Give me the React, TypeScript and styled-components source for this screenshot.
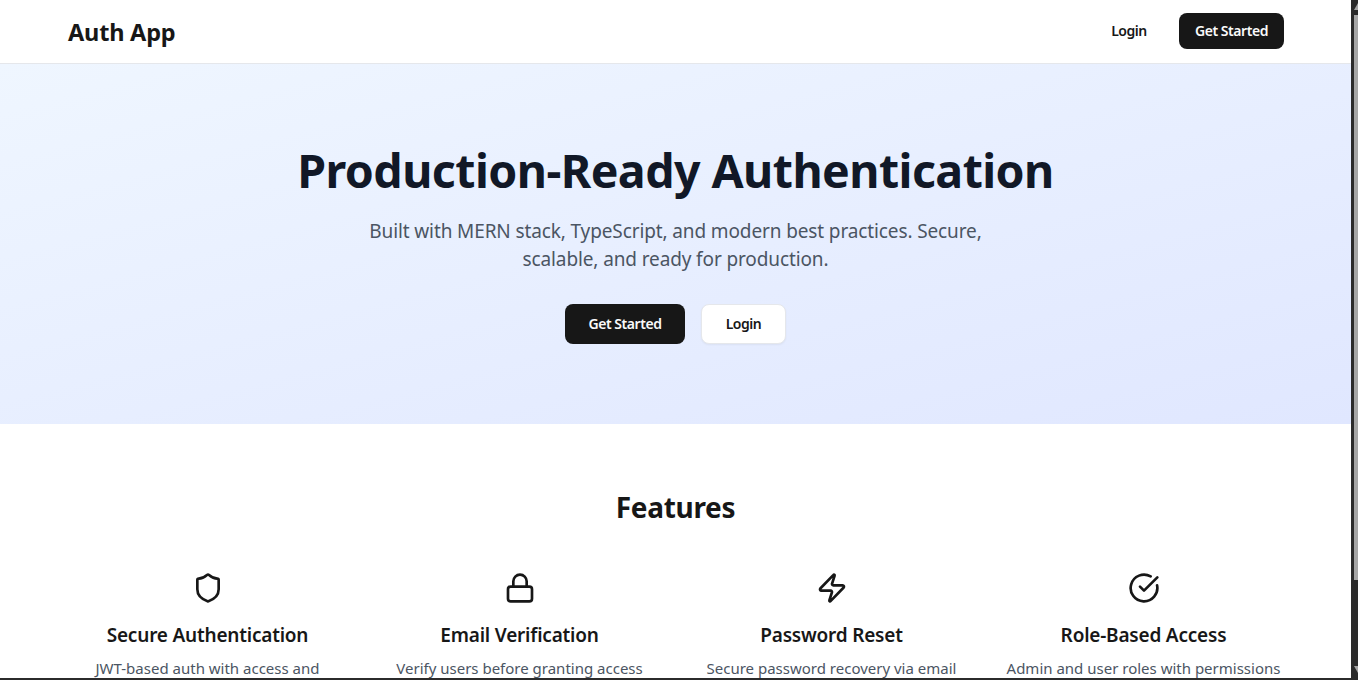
import React from "react";
import styled, { createGlobalStyle } from "styled-components";
import { Shield, Lock, Zap, CircleCheckBig } from "lucide-react";

const Global = createGlobalStyle`
  html, body { margin: 0; padding: 0; height: 100%; overflow: hidden; background: #fff; }
  body { font-family: "Noto Sans", "Open Sans", sans-serif; color: #171717; }
`;

const Frame = styled.div`
  height: 680px;
  display: flex;
  flex-direction: column;
  overflow: hidden;
  border-bottom: 2px solid #2b2b2b;
  box-sizing: border-box;
`;
const Body = styled.div`
  flex: 1;
  min-height: 0;
  display: flex;
`;
const Page = styled.main`
  flex: 1;
  min-width: 0;
  overflow: hidden;
`;
const Scrollbar = styled.div`
  width: 7px;
  background: #2b2b2b;
  display: flex;
  flex-direction: column;
  align-items: flex-end;
  padding: 3px 0 5px;
  box-sizing: border-box;
`;
const Arrow = styled.svg`
  width: 4px;
  height: 7px;
  display: block;
  flex: none;
`;
const Thumb = styled.div`
  width: 4px;
  height: 565px;
  margin-top: 5px;
  margin-bottom: auto;
  background: #a6a6a6;
`;
const Header = styled.header`
  height: 64px;
  box-sizing: border-box;
  border-bottom: 1px solid #e5e7eb;
  display: flex;
  align-items: center;
  justify-content: space-between;
  padding: 0 67px 2px 68px;
`;
const Brand = styled.div`
  font-size: 23.5px;
  font-weight: 700;
  margin-top: 2px;
  letter-spacing: -0.2px;
  color: #171717;
`;
const Actions = styled.nav`
  display: flex;
  align-items: center;
  gap: 15px;
`;
const Button = styled.button<{ $variant: "solid" | "ghost" | "outline"; $w: number; $h: number }>`
  width: ${(p) => p.$w}px;
  height: ${(p) => p.$h}px;
  font-family: inherit;
  font-size: 14px;
  font-weight: 600;
  letter-spacing: -0.45px;
  border-radius: 8px;
  cursor: pointer;
  padding: 0 0 ${(p) => (p.$h > 36 ? 2 : 0)}px;
  border: ${(p) => (p.$variant === "outline" ? "1px solid #e5e7eb" : "none")};
  background: ${(p) => (p.$variant === "solid" ? "#171717" : p.$variant === "outline" ? "#fff" : "transparent")};
  color: ${(p) => (p.$variant === "solid" ? "#fafafa" : "#171717")};
  box-shadow: ${(p) => (p.$variant === "outline" ? "0 1px 2px rgba(0,0,0,.05)" : "none")};
`;
const Hero = styled.section`
  height: 360px;
  box-sizing: border-box;
  padding-top: 76px;
  background: linear-gradient(to bottom right, #eff6ff 0%, #e0e7ff 100%);
  text-align: center;
`;
const Title = styled.h1`
  margin: 0;
  font-size: 46.5px;
  line-height: 60px;
  font-weight: 700;
  letter-spacing: -0.56px;
  color: #111827;
`;
const Lead = styled.p`
  margin: 17px auto 0;
  width: 672px;
  font-size: 19px;
  line-height: 28px;
  letter-spacing: -0.12px;
  color: #4b5563;
`;
const HeroActions = styled.div`
  margin-top: 31px;
  display: flex;
  justify-content: center;
  gap: 16px;
`;
const Features = styled.section`
  padding: 63px 67.5px 0;
`;
const SectionTitle = styled.h2`
  margin: 0;
  text-align: center;
  font-size: 28px;
  line-height: 40px;
  font-weight: 700;
  letter-spacing: -0.3px;
  color: #171717;
`;
const Grid = styled.div`
  margin-top: 45px;
  display: grid;
  grid-template-columns: repeat(4, 1fr);
  column-gap: 32px;
`;
const Card = styled.article`
  text-align: center;
`;
const IconWrap = styled.div`
  display: flex;
  justify-content: center;
  color: #171717;
  height: 32px;
`;
const CardTitle = styled.h3`
  margin: 17px 0 0;
  font-size: 19px;
  line-height: 28px;
  font-weight: 600;
  letter-spacing: -0.2px;
  color: #171717;
`;
const CardText = styled.p`
  margin: 7px 0 0;
  font-size: 15px;
  line-height: 24px;
  white-space: pre-line;
  color: #4b5563;
`;

const features = [
  { icon: Shield, title: "Secure Authentication", text: "JWT-based auth with access and\nrefresh tokens" },
  { icon: Lock, title: "Email Verification", text: "Verify users before granting access\nthrough email links" },
  { icon: Zap, title: "Password Reset", text: "Secure password recovery via email\nlinks" },
  { icon: CircleCheckBig, title: "Role-Based Access", text: "Admin and user roles with permissions\nbuilt in" },
];

export default function App() {
  return (
    <Frame>
      <Global />
      <Body>
        <Page>
          <Header>
            <Brand>Auth App</Brand>
            <Actions>
              <Button $variant="ghost" $w={70} $h={36}>Login</Button>
              <Button $variant="solid" $w={105} $h={36}>Get Started</Button>
            </Actions>
          </Header>
          <Hero>
            <Title>Production-Ready Authentication</Title>
            <Lead>Built with MERN stack, TypeScript, and modern best practices. Secure, scalable, and ready for production.</Lead>
            <HeroActions>
              <Button $variant="solid" $w={120} $h={40}>Get Started</Button>
              <Button $variant="outline" $w={85} $h={40}>Login</Button>
            </HeroActions>
          </Hero>
          <Features>
            <SectionTitle>Features</SectionTitle>
            <Grid>
              {features.map((f) => (
                <Card key={f.title}>
                  <IconWrap><f.icon size={32} strokeWidth={2} /></IconWrap>
                  <CardTitle>{f.title}</CardTitle>
                  <CardText>{f.text}</CardText>
                </Card>
              ))}
            </Grid>
          </Features>
        </Page>
        <Scrollbar>
          <Arrow viewBox="0 0 4 7"><polygon points="0,7 4,0 4,7" fill="#a6a6a6" /></Arrow>
          <Thumb />
          <Arrow viewBox="0 0 4 7"><polygon points="0,0 4,0 4,7" fill="#a6a6a6" /></Arrow>
        </Scrollbar>
      </Body>
    </Frame>
  );
}
